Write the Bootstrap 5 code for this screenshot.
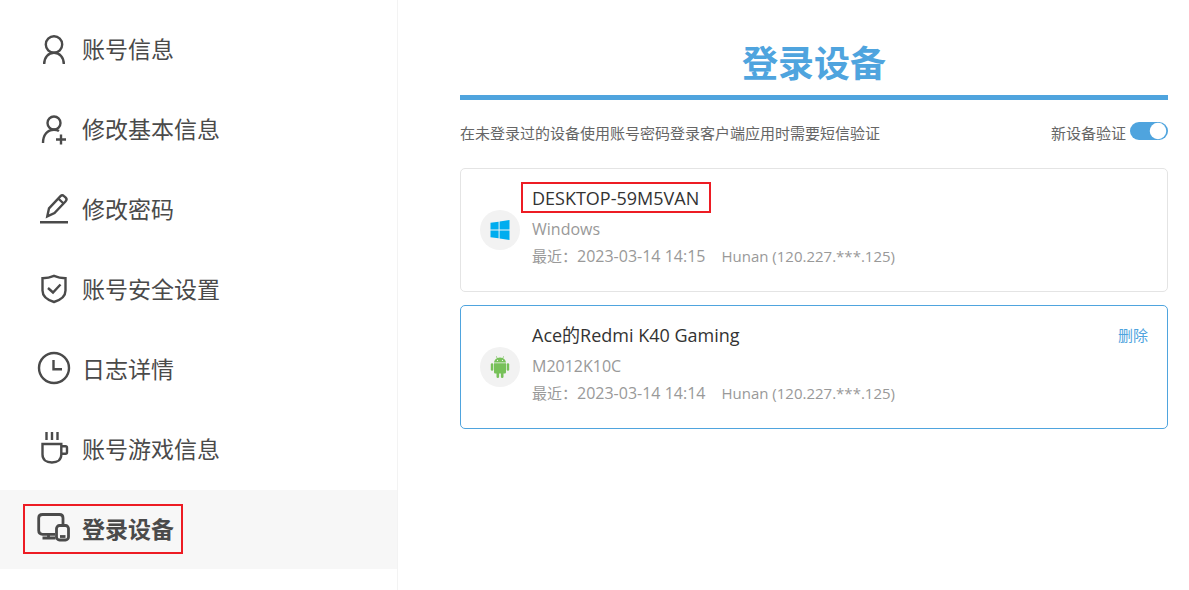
<!DOCTYPE html>
<html lang="zh-CN">
<head>
<meta charset="utf-8">
<meta name="viewport" content="width=device-width, initial-scale=1">
<title>登录设备</title>
<link href="https://cdn.jsdelivr.net/npm/bootstrap@5.3.0/dist/css/bootstrap.min.css" rel="stylesheet">
<style>
  :root { --accent: #4fa4de; --ink: #4a4a4a; }
  body { font-family: "Open Sans", "Noto Sans CJK SC", sans-serif; color: #333; background: #fff; }
  .side-menu { flex: 0 0 398px; border-right: 1px solid #f3f3f3; padding-top: 10px; }
  .side-link { height: 80px; padding: 0 0 2px 36px; gap: 10px; font-size: 23px; line-height: 32px; color: var(--ink); }
  .side-link:hover { color: var(--ink); background: #fafafa; }
  .side-link.active { height: 79px; background: #f7f7f7; font-weight: 700; }
  .side-link svg { width: 36px; height: 36px; fill: none; stroke: currentColor; stroke-width: 2.4; flex: none; }
  .side-link.active svg { stroke-width: 2.8; }
  .framed { position: relative; }
  .framed::after { content: ""; position: absolute; border: 2px solid #ed1c24; pointer-events: none; }
  .menu-frame { display: flex; align-items: center; gap: 10px; }
  .menu-frame::after { inset: -7px -9px -7px -13px; }
  .name-frame::after { inset: -1px -12px 1px -11px; }
  .content-area { padding: 38px 21px 24px 62px; min-width: 0; }
  .page-title { font-size: 36px; line-height: 52px; font-weight: 700; color: var(--accent); border-bottom: 5px solid var(--accent); padding-bottom: 5px; }
  .notice { font-size: 15px; line-height: 24px; color: #666; padding: 21px 0 23px; }
  .notice .form-check-input { width: 38px; height: 18px; margin: 0; border: 0; background-color: #ccc; }
  .notice .form-check-input:checked { background-color: var(--accent); background-size: 22px 22px; background-position: right -1px center; }
  .device-list { gap: 13px; }
  .device { border: 1px solid #e4e4e4; border-radius: 5px; padding: 0 19px; gap: 12px; }
  .device.current { border-color: var(--accent); }
  .device-icon { width: 40px; height: 40px; background: #f2f2f2; flex: none; }
  .device-text { padding: 14px 0 21px; font-size: 15px; line-height: 27px; color: #999; }
  .device-name { font-size: 18px; line-height: 31px; margin: 0 0 2px; font-weight: 400; color: #333; }
  .latin { font-size: 16px; }
  .remove-link { font-size: 15px; line-height: 31px; color: var(--accent); margin-top: 14px; }
</style>
</head>
<body>
<div class="d-flex min-vh-100">
  <nav class="side-menu d-flex flex-column">
    <a href="#" class="side-link d-flex align-items-center text-decoration-none">
      <svg viewBox="0 -1 36 36"><circle cx="18" cy="12.500" r="8.200"/><path d="M8.200 32c0-6.500 4-11.200 9.800-11.200S27.800 25.500 27.800 32"/></svg>
      <span>账号信息</span></a>
    <a href="#" class="side-link d-flex align-items-center text-decoration-none">
      <svg viewBox="0 -1 36 36"><circle cx="18" cy="11" r="6.500"/><path d="M7 31c0-8 4.500-13.300 11-13.300 2 0 3.700.4 5 1.300M25 22.500v10M20 27.500h10"/></svg>
      <span>修改基本信息</span></a>
    <a href="#" class="side-link d-flex align-items-center text-decoration-none">
      <svg viewBox="0 0 36 36"><path d="M4 31.200h28M11.300 25.300l1.700-8L24.500 5.200q1.700-1.700 3.500 0l1.700 1.500q1.700 1.700 0 3.500L18.500 22zM22.300 7.500l5.200 5"/></svg>
      <span>修改密码</span></a>
    <a href="#" class="side-link d-flex align-items-center text-decoration-none">
      <svg viewBox="0 0 36 36"><path d="M18 4.800c3.500 1.500 7.500 2.300 11.500 2.400v12.300c0 5.500-5 9.500-11.500 11.500C11.500 29 6.500 25 6.500 19.500V7.200C10.500 7.100 14.500 6.300 18 4.800z"/><path d="M12 17l5 4.500 7.500-8"/></svg>
      <span>账号安全设置</span></a>
    <a href="#" class="side-link d-flex align-items-center text-decoration-none">
      <svg viewBox="0 -1 36 36"><circle cx="18" cy="16" r="15"/><path d="M17.500 8v9.300H26"/></svg>
      <span>日志详情</span></a>
    <a href="#" class="side-link d-flex align-items-center text-decoration-none">
      <svg viewBox="0 -1 36 36"><path d="M10.500 0v8M16 0v8M21.500 0v8M6.500 12h18.800v10.500c0 5-3.500 8-9.400 8s-9.400-3-9.400-8zM25.300 14.300h4.200q1.500 0 1.500 1.500v4.400q0 1.500-1.500 1.500h-4.200"/></svg>
      <span>账号游戏信息</span></a>
    <a href="#" class="side-link active d-flex align-items-center text-decoration-none" aria-current="page">
      <span class="framed menu-frame">
        <svg viewBox="0 2 36 36"><path d="M19 25.300H6.500q-3.800 0-3.800-3.800V9q0-3.500 3.800-3.500h17q3.500 0 3.500 3.500v6"/><path d="M12.500 25.500v3M6.500 29h13"/><rect x="20.500" y="16.500" width="12" height="14.500" rx="3"/><path d="M24 27.500h5.500"/></svg>
        <span>登录设备</span>
      </span></a>
  </nav>
  <main class="content-area flex-grow-1">
    <h1 class="page-title text-center mb-0">登录设备</h1>
    <div class="notice d-flex align-items-center justify-content-between">
      <span>在未登录过的设备使用账号密码登录客户端应用时需要短信验证</span>
      <div class="form-switch d-flex align-items-start p-0 gap-1">
        <label for="verify">新设备验证</label>
        <input class="form-check-input mt-0 align-self-center mb-1" type="checkbox" role="switch" id="verify" checked>
      </div>
    </div>
    <div class="d-grid device-list">
      <section class="device d-flex">
        <div class="device-icon rounded-circle d-flex align-items-center justify-content-center align-self-center">
          <svg width="20" height="20" viewBox="0 0 20 20" fill="#00adef"><path d="M.5 2.800L8.600 1.700v7.800H.5zM9.600 1.500L19.500 0v9.500H9.600zM.5 10.500h8.100v7.800L.5 17.200zM9.600 10.500h9.900V20l-9.900-1.400z"/></svg>
        </div>
        <div class="device-text">
          <h2 class="device-name"><span class="framed name-frame d-inline-block">DESKTOP-59M5VAN</span></h2>
          <div class="latin">Windows</div>
          <div class="d-flex"><span>最近：</span><span class="latin me-3">2023-03-14 14:15</span><span>Hunan (120.227.***.125)</span></div>
        </div>
      </section>
      <section class="device current d-flex">
        <div class="device-icon rounded-circle d-flex align-items-center justify-content-center align-self-center">
          <svg width="20" height="22" viewBox="0 0 20 22" fill="#77c159"><path d="M4 6.500C4.200 4.500 5.300 3 7 2.200L5.900.4l.4-.3L7.500 2q2.500-.9 5 0L13.700.1l.4.3L13 2.200c1.700.8 2.800 2.300 3 4.300z"/><path d="M4 7.300h12v9q0 1.200-1.200 1.200h-1.300v3.200a1.300 1.300 0 0 1-2.600 0v-3.200H9.100v3.200a1.300 1.300 0 0 1-2.600 0v-3.200H5.200Q4 17.500 4 16.300z"/><rect x=".8" y="7.300" width="2.500" height="7.500" rx="1.200"/><rect x="16.700" y="7.300" width="2.500" height="7.500" rx="1.200"/><g fill="#f2f2f2"><circle cx="7.500" cy="4.400" r=".6"/><circle cx="12.500" cy="4.400" r=".6"/></g></svg>
        </div>
        <div class="device-text flex-grow-1">
          <h2 class="device-name">Ace的Redmi K40 Gaming</h2>
          <div class="latin">M2012K10C</div>
          <div class="d-flex"><span>最近：</span><span class="latin me-3">2023-03-14 14:14</span><span>Hunan (120.227.***.125)</span></div>
        </div>
        <a href="#" class="remove-link text-decoration-none align-self-start">删除</a>
      </section>
    </div>
  </main>
</div>
<script src="https://cdn.jsdelivr.net/npm/bootstrap@5.3.0/dist/js/bootstrap.bundle.min.js"></script>
</body>
</html>
